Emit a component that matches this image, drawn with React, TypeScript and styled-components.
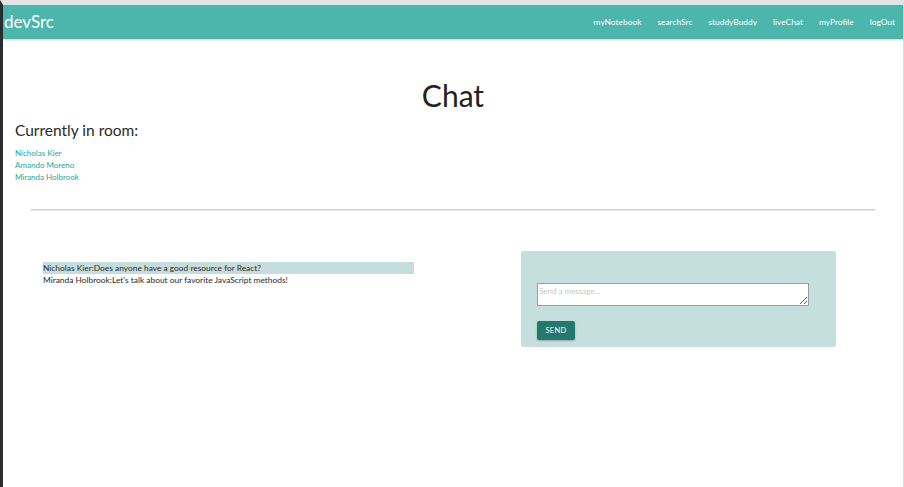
import React from "react";
import styled, { createGlobalStyle } from "styled-components";

const Global = createGlobalStyle`
  html, body { margin: 0; padding: 0; background: #ffffff; }
  body { font-family: "Lato", "Noto Sans", sans-serif; color: #333; }
  * { box-sizing: border-box; }
`;

const Frame = styled.div`
  min-height: 487px;
  border-left: 3px solid #2b2b30;
  border-right: 1px solid #dcdcdc;
  border-top: 5px solid #e4e4e4;
  background: #fff;
`;

const Nav = styled.nav`
  height: 34px;
  background: #4db6ac;
  display: flex;
  align-items: center;
  justify-content: space-between;
  box-shadow: 0 1px 2px rgba(0, 0, 0, 0.2);
  padding: 0 0 0 1px;
`;

const Brand = styled.a`
  color: #fff;
  font-size: 17px;
  text-decoration: none;
  line-height: 34px;
`;

const NavLinks = styled.ul`
  display: flex;
  list-style: none;
  margin: 0;
  padding: 0 0 0 0;
`;

const NavLink = styled.li`
  color: #fff;
  font-size: 8.4px;
  padding: 0 8px;
  line-height: 34px;
`;

const Title = styled.h1`
  margin: 38px 0 0;
  text-align: center;
  font-weight: 400;
  font-size: 30px;
  line-height: 36px;
  color: #222;
`;

const Room = styled.section`
  padding: 5px 12px 0;
`;

const RoomHeading = styled.h4`
  margin: 0 0 5px;
  font-size: 15.5px;
  font-weight: 400;
  line-height: 24px;
  color: #2a2a2a;
`;

const Member = styled.div`
  font-size: 8px;
  line-height: 12px;
  color: #26a69a;
`;

const Divider = styled.hr`
  margin: 26px 28px 0;
  border: none;
  border-top: 1px solid #d0d0d0;
  border-bottom: 1px solid #e6e6e6;
  height: 0;
`;

const ChatRow = styled.div`
  display: grid;
  grid-template-columns: 422px 1fr;
  margin: 0 28px;
`;

const MessageList = styled.div`
  margin: 51px 0 0 12px;
  width: 371px;
`;

const Message = styled.div<{ $active?: boolean }>`
  font-size: 8.4px;
  line-height: 12px;
  color: #2a2a2a;
  background: ${(p) => (p.$active ? "#c5dedd" : "transparent")};
`;

const Card = styled.div`
  margin: 40px 0 0 68px;
  width: 315px;
  background: #c5dfde;
  border-radius: 3px;
  padding: 32px 26px 7px 16px;
`;

const TextArea = styled.textarea`
  display: block;
  width: 272px;
  height: 23px;
  border: 1px solid #9e9e9e;
  background: #fff;
  font-family: "Lato", "Noto Sans", sans-serif;
  font-size: 8px;
  padding: 2px 1px;
  resize: vertical;
  color: #333;
  &::placeholder { color: #c8c8c8; }
`;

const SendButton = styled.button`
  margin-top: 15px;
  width: 38px;
  height: 19px;
  border: none;
  border-radius: 2px;
  background: #23796e;
  color: #fff;
  font-family: "Lato", "Noto Sans", sans-serif;
  font-size: 7.5px;
  letter-spacing: 0.3px;
  text-transform: uppercase;
  box-shadow: 0 1px 2px rgba(0, 0, 0, 0.25);
  padding: 0;
`;

const links = ["myNotebook", "searchSrc", "studdyBuddy", "liveChat", "myProfile", "logOut"];
const members = ["Nicholas Kier", "Amando Moreno", "Miranda Holbrook"];
const messages = [
  { who: "Nicholas Kier", text: "Does anyone have a good resource for React?", active: true },
  { who: "Miranda Holbrook", text: "Let's talk about our favorite JavaScript methods!", active: false },
];

export default function App() {
  return (
    <>
      <Global />
      <Frame>
        <Nav>
          <Brand>devSrc</Brand>
          <NavLinks>
            {links.map((l) => (
              <NavLink key={l}>{l}</NavLink>
            ))}
          </NavLinks>
        </Nav>
        <Title>Chat</Title>
        <Room>
          <RoomHeading>Currently in room:</RoomHeading>
          {members.map((m) => (
            <Member key={m}>{m}</Member>
          ))}
        </Room>
        <Divider />
        <ChatRow>
          <MessageList>
            {messages.map((m) => (
              <Message key={m.who} $active={m.active}>
                {m.who}:{m.text}
              </Message>
            ))}
          </MessageList>
          <Card>
            <TextArea placeholder="Send a message..." />
            <SendButton>Send</SendButton>
          </Card>
        </ChatRow>
      </Frame>
    </>
  );
}
